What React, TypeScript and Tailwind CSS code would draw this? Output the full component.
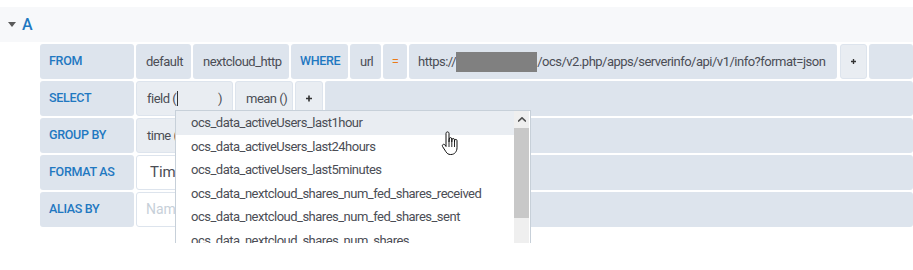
const font = { fontFamily: 'Roboto, "Liberation Sans", sans-serif' }

const label = 'h-full flex items-center px-[9px] rounded-[3px] bg-[#dde4ed] text-[#1f78c1] text-[12.5px] tracking-[-0.3px] font-medium shrink-0 whitespace-nowrap'
const part = 'h-full flex items-center px-[10px] rounded-[3px] bg-[#dde4ed] text-[#4b4d55] text-[13px] tracking-[-0.5px] shrink-0 whitespace-nowrap'
const partLight = 'h-full flex items-center px-[10px] rounded-[3px] bg-[#e9edf2] border border-[#dde4ed] text-[#4b4d55] text-[13px] tracking-[-0.5px] shrink-0 whitespace-nowrap'
const filler = 'h-full flex-1 rounded-[3px] bg-[#dde4ed]'

const fields = [
  'ocs_data_activeUsers_last1hour',
  'ocs_data_activeUsers_last24hours',
  'ocs_data_activeUsers_last5minutes',
  'ocs_data_nextcloud_shares_num_fed_shares_received',
  'ocs_data_nextcloud_shares_num_fed_shares_sent',
  'ocs_data_nextcloud_shares_num_shares',
]

function PlusMark() {
  return (
    <svg width="11" height="11" viewBox="0 0 11 11">
      <path d="M4 0h3v4h4v3H7v4H4V7H0V4h4z" fill="#333" />
    </svg>
  )
}

function HandCursor() {
  return (
    <svg width="18" height="26" viewBox="0 0 18 26" className="absolute left-[441px] top-[131px]">
      <path
        d="M5 2.5c0-1 .7-1.6 1.5-1.6S8 1.5 8 2.5V11l.2-3c0-.9.6-1.4 1.3-1.4s1.3.5 1.3 1.4v3l.1-2.2c0-.8.6-1.3 1.3-1.3s1.3.5 1.3 1.3V11l.1-1.4c0-.7.5-1.2 1.2-1.2s1.2.5 1.2 1.2v7.2c0 3.5-2.2 6.7-6 6.7H9.5c-2.2 0-3.4-1-4.6-2.8L1.6 15.6c-.5-.8-.3-1.7.4-2.1.7-.4 1.5-.2 2 .5L5 15.5z"
        fill="#fff"
        stroke="#111"
        strokeWidth="1"
        strokeLinejoin="round"
      />
      <path d="M8 11v5M10.8 11v5M13.5 11v5" stroke="#111" strokeWidth="0.9" />
    </svg>
  )
}

export default function App() {
  return (
    <div className="relative w-[913px] h-[270px] bg-white overflow-hidden" style={font}>
      <div className="h-[7px]" />
      <div className="h-[35px] bg-[#f7f8fa] flex items-center pl-[8px] gap-[6px]">
        <svg width="8" height="5" viewBox="0 0 8 5">
          <path d="M0 0h8L4 5z" fill="#5a5a5a" />
        </svg>
        <span className="text-[#1f78c1] text-[16px] font-medium leading-none">A</span>
      </div>

      <div className="pl-[40px] pt-[2px] flex flex-col gap-[2px]">
        <div className="h-[35px] flex gap-[2px]">
          <div className={`${label} w-[94px]`}>FROM</div>
          <div className={`${part} w-[55px]`}>default</div>
          <div className={`${part} w-[96px]`}>nextcloud_http</div>
          <div className={`${label} w-[57px]`}>WHERE</div>
          <div className={`${part} w-[31px]`}>url</div>
          <div className={`${part} w-[24px] justify-center text-[#eb7b18]`}>=</div>
          <div className={`${part} w-[428px] pl-[9px]`}>
            https://<span className="inline-block shrink-0 w-[81px] h-[20px] bg-[#808080]" />/ocs/v2.php/apps/serverinfo/api/v1/info?format=json
          </div>
          <div className={`${partLight} w-[27px] ml-[1px] justify-center px-0`}>
            <PlusMark />
          </div>
          <div className={filler} />
        </div>

        <div className="h-[35px] flex gap-[2px]">
          <div className={`${label} w-[94px]`}>SELECT</div>
          <div className={`${partLight} w-[97px]`}>
            field (<span className="inline-block shrink-0 w-[1px] h-[15px] bg-[#333] ml-[1px]" />
            <span className="flex-1" />)
          </div>
          <div className={`${partLight} w-[58px]`}>mean ()</div>
          <div className={`${partLight} w-[28px] justify-center px-0`}>
            <PlusMark />
          </div>
          <div className={filler} />
        </div>

        <div className="h-[35px] flex gap-[2px]">
          <div className={`${label} w-[94px]`}>GROUP BY</div>
          <div className={`${partLight} w-[120px]`}>time (</div>
          <div className={filler} />
        </div>

        <div className="h-[35px] flex gap-[2px]">
          <div className={`${label} w-[94px]`}>FORMAT AS</div>
          <div className="h-full w-[170px] flex items-center pl-[13px] bg-white border border-[#dde4ed] rounded-[3px] text-[#4b4d55] text-[15px]">
            Time series
          </div>
          <div className={filler} />
        </div>

        <div className="h-[35px] flex gap-[2px]">
          <div className={`${label} w-[94px]`}>ALIAS BY</div>
          <div className="h-full w-[170px] flex items-center pl-[9px] bg-white border border-[#dde4ed] rounded-[3px] text-[#c7d0d9] text-[14px]">
            Naming pattern
          </div>
          <div className={filler} />
        </div>
      </div>

      <div className="absolute left-[175px] top-[110px] w-[356px] h-[133px] bg-white border border-b-0 border-[#c7d0d9] flex overflow-hidden">
        <div className="flex-1 flex flex-col">
          {fields.map((f, i) => (
            <div
              key={f}
              className={`h-[23.6px] shrink-0 flex items-center pl-[15px] text-[13px] tracking-[-0.5px] text-[#4b4d55] whitespace-nowrap ${i === 0 ? 'bg-[#e9edf2]' : ''}`}
            >
              {f}
            </div>
          ))}
        </div>
        <div className="w-[15px] mr-[1px] flex flex-col bg-[#efefef]">
          <div className="h-[17px] flex items-center justify-center">
            <svg width="8" height="5" viewBox="0 0 8 5">
              <path d="M0 4.5L4 0.8L8 4.5" fill="none" stroke="#505050" strokeWidth="1.6" />
            </svg>
          </div>
          <div className="h-[90px] bg-[#c8c8c8]" />
        </div>
      </div>

      <HandCursor />
    </div>
  )
}
